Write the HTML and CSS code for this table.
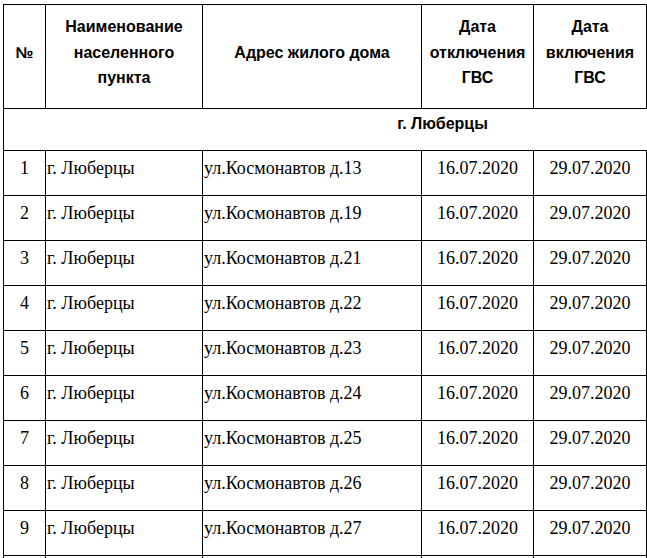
FILE: index.html
```html
<!DOCTYPE html>
<html lang="ru">
<head>
<meta charset="utf-8">
<title>График отключения ГВС</title>
<link rel="stylesheet" href="styles.css">
</head>
<body>
<table class="schedule">
  <thead>
    <tr class="head-row">
      <th class="c-num">№</th>
      <th class="c-city">Наименование<br>населенного<br>пункта</th>
      <th class="c-addr">Адрес жилого дома</th>
      <th class="c-off">Дата<br>отключения<br>ГВС</th>
      <th class="c-on">Дата<br>включения<br>ГВС</th>
    </tr>
  </thead>
  <tbody>
    <tr class="section-row">
      <td colspan="5" class="section">г. Люберцы</td>
    </tr>
    <tr class="row"><td class="num">1</td><td class="txt">г. Люберцы</td><td class="txt">ул.Космонавтов д.13</td><td class="date">16.07.2020</td><td class="date">29.07.2020</td></tr>
    <tr class="row"><td class="num">2</td><td class="txt">г. Люберцы</td><td class="txt">ул.Космонавтов д.19</td><td class="date">16.07.2020</td><td class="date">29.07.2020</td></tr>
    <tr class="row"><td class="num">3</td><td class="txt">г. Люберцы</td><td class="txt">ул.Космонавтов д.21</td><td class="date">16.07.2020</td><td class="date">29.07.2020</td></tr>
    <tr class="row"><td class="num">4</td><td class="txt">г. Люберцы</td><td class="txt">ул.Космонавтов д.22</td><td class="date">16.07.2020</td><td class="date">29.07.2020</td></tr>
    <tr class="row"><td class="num">5</td><td class="txt">г. Люберцы</td><td class="txt">ул.Космонавтов д.23</td><td class="date">16.07.2020</td><td class="date">29.07.2020</td></tr>
    <tr class="row"><td class="num">6</td><td class="txt">г. Люберцы</td><td class="txt">ул.Космонавтов д.24</td><td class="date">16.07.2020</td><td class="date">29.07.2020</td></tr>
    <tr class="row"><td class="num">7</td><td class="txt">г. Люберцы</td><td class="txt">ул.Космонавтов д.25</td><td class="date">16.07.2020</td><td class="date">29.07.2020</td></tr>
    <tr class="row"><td class="num">8</td><td class="txt">г. Люберцы</td><td class="txt">ул.Космонавтов д.26</td><td class="date">16.07.2020</td><td class="date">29.07.2020</td></tr>
    <tr class="row"><td class="num">9</td><td class="txt">г. Люберцы</td><td class="txt">ул.Космонавтов д.27</td><td class="date">16.07.2020</td><td class="date">29.07.2020</td></tr>
    <tr class="row row-next"><td class="num"></td><td class="txt"></td><td class="txt"></td><td class="date"></td><td class="date"></td></tr>
  </tbody>
</table>
</body>
</html>
```
FILE: styles.css
```css
html, body {
  margin: 0;
  padding: 0;
  background: #ffffff;
}

.schedule {
  margin: 4px 0 0 3px;
  border-collapse: separate;
  border-spacing: 0;
  table-layout: fixed;
  width: 644px;
  border-top: 1px solid #000;
  border-left: 1px solid #000;
  color: #000;
}

.schedule th,
.schedule td {
  box-sizing: border-box;
  border-right: 1px solid #000;
  border-bottom: 1px solid #000;
  padding: 0;
}

.head-row th {
  height: 104px;
  font-family: "Liberation Sans", Arial, sans-serif;
  font-weight: bold;
  font-size: 16px;
  line-height: 25.5px;
  text-align: center;
  vertical-align: middle;
  padding-bottom: 8px;
}

.c-num { width: 42px; }
.c-city { width: 157px; }
.c-addr { width: 219px; }
.c-off { width: 112px; }
.c-on { width: 113px; }

.section-row td.section {
  height: 42px;
  border-right: none;
  font-family: "Liberation Sans", Arial, sans-serif;
  font-weight: bold;
  font-size: 16px;
  line-height: 20px;
  text-align: center;
  vertical-align: top;
  padding: 5px 0 0 234px;
}

.row td {
  height: 45px;
  font-family: "Liberation Serif", "Times New Roman", serif;
  font-size: 18px;
  line-height: 21px;
  vertical-align: top;
  padding-top: 7px;
  white-space: nowrap;
}

.row td.num,
.row td.date {
  text-align: center;
}

.row td.txt {
  text-align: left;
  padding-left: 1px;
}
```
